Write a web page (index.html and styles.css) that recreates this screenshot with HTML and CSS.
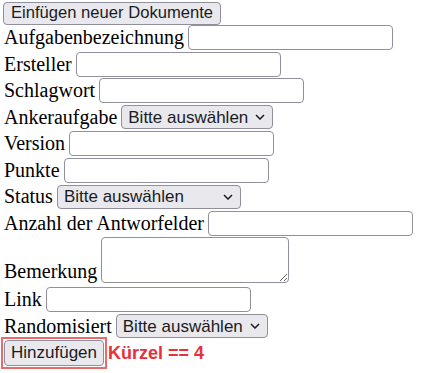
FILE: index.html
```html
<!DOCTYPE html>
<html lang="de">

<head>
    <meta charset="UTF-8">
    <title>Einfügen neuer Dokumente</title>
    <link rel="stylesheet" href="styles.css">
</head>

<body>
    <div class="top">
        <button class="btn">Einfügen neuer Dokumente</button>
    </div>
    <form class="form">
        <div class="row">
            <label>Aufgabenbezeichnung</label>
            <input type="text" class="field">
        </div>
        <div class="row">
            <label>Ersteller</label>
            <input type="text" class="field">
        </div>
        <div class="row">
            <label>Schlagwort</label>
            <input type="text" class="field">
        </div>
        <div class="row">
            <label>Ankeraufgabe</label>
            <span class="select">
                <select class="choice">
                    <option>Bitte auswählen</option>
                </select>
                <svg class="chevron" width="10" height="6" viewBox="0 0 10 6"><path d="M1 1l4 4 4-4" fill="none" stroke="#1b1b1f" stroke-width="1.5"/></svg>
            </span>
        </div>
        <div class="row">
            <label>Version</label>
            <input type="text" class="field">
        </div>
        <div class="row">
            <label>Punkte</label>
            <input type="text" class="field">
        </div>
        <div class="row">
            <label>Status</label>
            <span class="select">
                <select class="choice wide">
                    <option>Bitte auswählen</option>
                </select>
                <svg class="chevron" width="10" height="6" viewBox="0 0 10 6"><path d="M1 1l4 4 4-4" fill="none" stroke="#1b1b1f" stroke-width="1.5"/></svg>
            </span>
        </div>
        <div class="row">
            <label>Anzahl der Antworfelder</label>
            <input type="text" class="field">
        </div>
        <div class="row note-row">
            <label>Bemerkung</label>
            <textarea class="note"></textarea>
        </div>
        <div class="row">
            <label>Link</label>
            <input type="text" class="field">
        </div>
        <div class="row">
            <label>Randomisiert</label>
            <span class="select">
                <select class="choice">
                    <option>Bitte auswählen</option>
                </select>
                <svg class="chevron" width="10" height="6" viewBox="0 0 10 6"><path d="M1 1l4 4 4-4" fill="none" stroke="#1b1b1f" stroke-width="1.5"/></svg>
            </span>
        </div>
        <div class="row submit-row">
            <span class="highlight">
                <button type="button" class="btn submit">Hinzufügen</button>
            </span>
            <span class="hint">Kürzel == 4</span>
        </div>
    </form>
</body>

</html>
```
FILE: styles.css
```css
body {
    margin: 0;
    padding: 0 3px;
    font-family: "Liberation Serif", "Times New Roman", serif;
    font-size: 20px;
    line-height: 23px;
    color: black;
    background: white;
}

.top {
    height: 23px;
    margin-bottom: 2px;
}

.row {
    display: flex;
    align-items: center;
    gap: 4px;
    min-height: 25px;
    margin-bottom: 1.5px;
}

.row label {
    padding-left: 1px;
}

.btn {
    font-family: "Liberation Sans", Arial, sans-serif;
    font-size: 16.6px;
    color: #1b1b1f;
    background-color: #e9e9ed;
    border: 1px solid #8f8f9d;
    border-radius: 4px;
    height: 23px;
    padding: 0 7px;
    line-height: 20px;
}

.field {
    font-family: "Liberation Sans", Arial, sans-serif;
    font-size: 16px;
    width: 205px;
    height: 25px;
    box-sizing: border-box;
    border: 1px solid #8f8f9d;
    border-radius: 4px;
    padding: 1px 3px;
    margin: 0;
}

.select {
    position: relative;
    display: block;
    height: 24px;
}

.choice {
    appearance: none;
    display: block;
    font-family: "Liberation Sans", Arial, sans-serif;
    font-size: 17px;
    color: #1b1b1f;
    background-color: #e9e9ed;
    border: 1px solid #8f8f9d;
    border-radius: 4px;
    width: 152px;
    height: 24px;
    padding: 0 6px;
    margin: 0;
}

.choice.wide {
    width: 184px;
}

.chevron {
    position: absolute;
    right: 8px;
    top: 9px;
    pointer-events: none;
}

.note {
    width: 188px;
    height: 46px;
    box-sizing: border-box;
    border: 1px solid #8f8f9d;
    border-radius: 4px;
    margin: 0;
    font-size: 16px;
    display: block;
}

.note-row {
    align-items: flex-end;
    margin-bottom: 4px;
}

.note-row label {
    margin-bottom: 0;
}

.submit-row {
    gap: 1px;
    margin-top: -3px;
}

.highlight {
    display: inline-block;
    border: 2px solid #e86a6a;
    padding: 1px;
    margin-left: -2px;
}

.submit {
    display: block;
    height: 26px;
    padding: 0 6px;
    font-size: 17px;
}

.hint {
    font-family: "Liberation Sans", Arial, sans-serif;
    font-size: 18px;
    font-weight: bold;
    color: #e8303a;
}
```
